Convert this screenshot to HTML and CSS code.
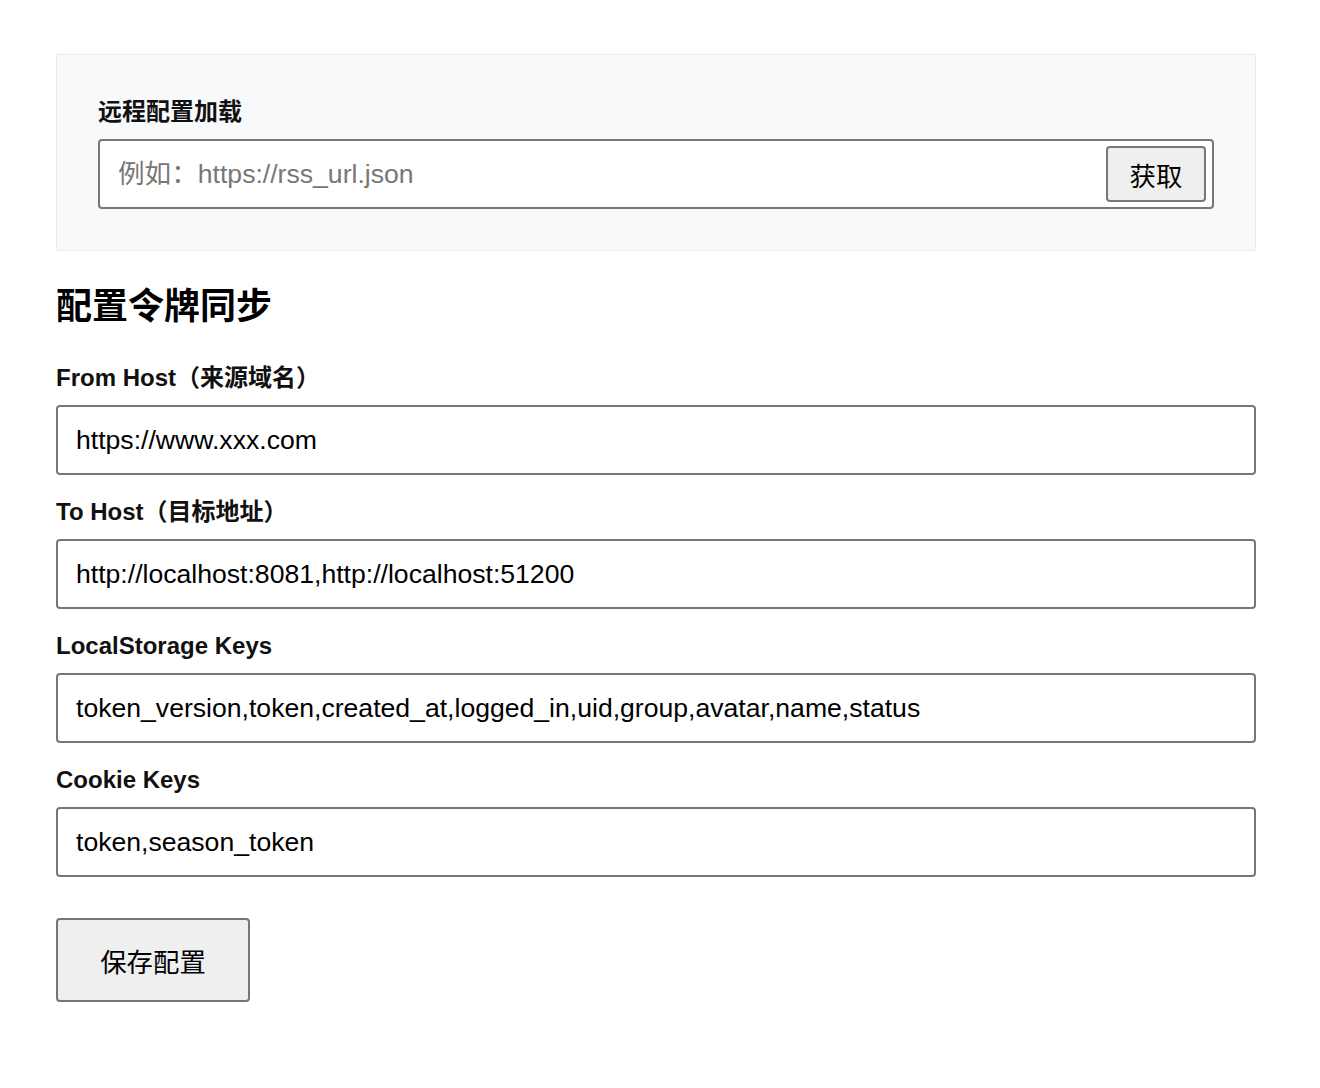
FILE: index.html
```html
<!DOCTYPE html>
<html lang="zh-CN">
<head>
<meta charset="utf-8">
<title>配置令牌同步</title>
<link rel="stylesheet" href="styles.css">
</head>
<body>
<div class="page">
  <section class="remote">
    <label class="label" for="remote-url">远程配置加载</label>
    <div class="remote-box">
      <input id="remote-url" class="remote-input" type="text" placeholder="例如：https://rss_url.json">
      <button class="btn fetch" type="button">获取</button>
    </div>
  </section>

  <h2 class="title">配置令牌同步</h2>

  <div class="field">
    <label class="label" for="from">From Host（来源域名）</label>
    <input id="from" class="input" type="text" value="https://www.xxx.com">
  </div>
  <div class="field">
    <label class="label" for="to">To Host（目标地址）</label>
    <input id="to" class="input" type="text" value="http://localhost:8081,http://localhost:51200">
  </div>
  <div class="field">
    <label class="label" for="ls">LocalStorage Keys</label>
    <input id="ls" class="input" type="text" value="token_version,token,created_at,logged_in,uid,group,avatar,name,status">
  </div>
  <div class="field">
    <label class="label" for="ck">Cookie Keys</label>
    <input id="ck" class="input" type="text" value="token,season_token">
  </div>

  <button class="btn save" type="button">保存配置</button>
</div>
</body>
</html>
```

FILE: styles.css
```css
* { box-sizing: border-box; }
html, body { margin: 0; padding: 0; background: #fff; }
body {
  font-family: "Liberation Sans", "Noto Sans CJK SC", sans-serif;
  color: #000;
}
.page {
  width: 1200px;
  margin-left: 56px;
  padding-top: 54px;
}
.remote {
  background: #f8f9fb;
  border: 1px solid #ebebeb;
  padding: 43px 41px 41px 41px;
}
.label {
  display: block;
  font-size: 24px;
  line-height: 28px;
  font-weight: bold;
  margin-bottom: 13px;
  color: #111;
}
.remote-box {
  display: flex;
  align-items: center;
  height: 70px;
  background: #fff;
  border: 2px solid #767676;
  border-radius: 4px;
  padding: 0 6px 0 18px;
}
.remote-input {
  flex: 1;
  border: none;
  outline: none;
  background: transparent;
  font-family: inherit;
  font-size: 26.6px;
  color: #000;
  padding: 0;
  height: 40px;
}
.remote-input::placeholder { color: #777; }
.btn {
  font-family: inherit;
  font-size: 26.4px;
  color: #000;
  background: #efefef;
  border: 2px solid #767676;
  border-radius: 4px;
  padding: 0;
}
.fetch {
  width: 100px;
  height: 56px;
}
.title {
  font-size: 36px;
  line-height: 40px;
  font-weight: bold;
  margin: 36px 0 37px 0;
}
.field { margin-bottom: 23px; }
.input {
  display: block;
  width: 100%;
  height: 70px;
  border: 2px solid #767676;
  border-radius: 4px;
  padding: 0 18px;
  font-family: inherit;
  font-size: 26.6px;
  color: #000;
  background: #fff;
}
.save {
  margin-top: 18px;
  width: 194px;
  height: 84px;
}
```
